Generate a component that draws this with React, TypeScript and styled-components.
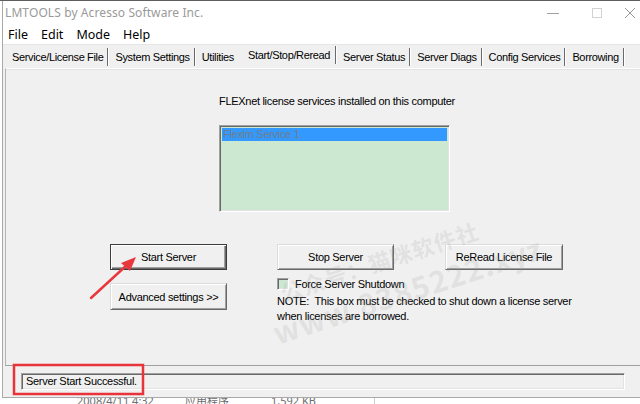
import React from "react";
import styled, { createGlobalStyle } from "styled-components";

const GlobalStyle = createGlobalStyle`
  html, body { margin: 0; padding: 0; width: 640px; height: 404px; overflow: hidden; background: #ffffff; }
  #root { width: 640px; height: 404px; }
`;

const Page = styled.div`
  position: relative;
  width: 640px;
  height: 404px;
  overflow: hidden;
  background: #ffffff;
  border-top: 1px solid #5e5e5e;
  box-sizing: border-box;
  display: flex;
  flex-direction: column;
`;

const Window = styled.div`
  height: 396px;
  margin-left: 2px;
  border-left: 1px solid #a9a9a9;
  border-bottom: 1px solid #a9a9a9;
  background: #f0f0f0;
  display: flex;
  flex-direction: column;
  font-family: "Liberation Sans", Arial, sans-serif;
  font-size: 11px;
  letter-spacing: -0.3px;
  color: #000;
`;

const TitleBar = styled.div`
  height: 23px;
  background: #ffffff;
  display: flex;
  align-items: center;
  padding-left: 2px;
  font-family: "Noto Sans", "Open Sans", sans-serif;
  font-size: 12px;
  letter-spacing: 0.1px;
  color: #9a9a9a;
`;

const Title = styled.span`
  flex: 1;
`;

const Controls = styled.div`
  display: flex;
  align-items: center;
  height: 100%;
`;

const ControlButton = styled.div<{ $w?: number }>`
  width: ${(p) => p.$w ?? 44}px;
  height: 23px;
  display: flex;
  align-items: center;
  justify-content: center;
`;

const MenuBar = styled.div`
  height: 20px;
  background: #ffffff;
  display: flex;
  align-items: center;
  font-family: "Noto Sans", "Open Sans", sans-serif;
  font-size: 12.5px;
  letter-spacing: 0;
  border-bottom: 1px solid #e6e6e6;
`;

const MenuItem = styled.span`
  padding: 0 6px 0 5px;
  margin-right: 2px;
`;

const TabStrip = styled.div`
  height: 23px;
  display: flex;
  align-items: center;
  padding-left: 3px;
  letter-spacing: -0.35px;
`;

const Tab = styled.div<{ $sep: boolean; $active?: boolean }>`
  height: 18px;
  display: flex;
  align-items: center;
  padding: ${(p) => (p.$active ? "0 5px 0 8px" : "0 4px 0 6px")};
  margin-top: ${(p) => (p.$active ? "-3px" : "0")};
  border-right: 1px solid ${(p) => (p.$sep ? "#6a6a6a" : "transparent")};
  box-shadow: ${(p) => (p.$sep ? "1px 0 0 #ffffff" : "none")};
  margin-right: 1px;
  white-space: nowrap;
`;

const Panel = styled.div`
  flex: 1;
  margin-left: 2px;
  border-top: 1px solid #ffffff;
  border-left: 1px solid #b4b4b4;
  border-bottom: 1px solid #a0a0a0;
  box-shadow: inset 0 1px 0 #e3e3e3;
  padding-top: 26px;
  display: flex;
  flex-direction: column;
`;

const ServiceBlock = styled.div`
  margin-left: 213px;
  display: flex;
  flex-direction: column;
  gap: 17px;
`;

const Label = styled.div`
  line-height: 13px;
`;

const ListBox = styled.div`
  width: 231px;
  height: 87px;
  box-sizing: border-box;
  background: #cde8d0;
  border-top: 1px solid #a0a0a0;
  border-left: 1px solid #a0a0a0;
  border-right: 1px solid #ffffff;
  border-bottom: 1px solid #ffffff;
  box-shadow: inset 1px 1px 0 #696969, inset -1px -1px 0 #e3e3e3;
  padding: 2px;
`;

const ListItem = styled.div<{ $selected?: boolean }>`
  height: 13px;
  line-height: 13px;
  padding-left: 1px;
  background: ${(p) => (p.$selected ? "#3399ff" : "transparent")};
  color: ${(p) => (p.$selected ? "#6f7d8a" : "#000")};
`;

const ButtonArea = styled.div`
  margin-top: 32px;
  margin-left: 104px;
  display: flex;
  gap: 50px;
`;

const Column = styled.div<{ $gap?: number }>`
  display: flex;
  flex-direction: column;
  gap: ${(p) => p.$gap ?? 0}px;
`;

const ButtonRow = styled.div`
  display: flex;
  gap: 51px;
`;

const Button = styled.div<{ $default?: boolean; $w?: number; $h?: number }>`
  width: ${(p) => p.$w ?? 117}px;
  height: ${(p) => p.$h ?? 26}px;
  box-sizing: border-box;
  display: flex;
  align-items: center;
  justify-content: center;
  background: #f0f0f0;
  border: 1px solid ${(p) => (p.$default ? "#3c3c3c" : "#dcdcdc")};
  border-right-color: ${(p) => (p.$default ? "#3c3c3c" : "#696969")};
  border-bottom-color: ${(p) => (p.$default ? "#3c3c3c" : "#696969")};
  box-shadow: ${(p) =>
    p.$default
      ? "inset 1px 1px 0 #ffffff, inset -1px -1px 0 #696969, inset -2px -2px 0 #a0a0a0"
      : "inset 1px 1px 0 #ffffff, inset -1px -1px 0 #a0a0a0"};
  font-size: 11px;
  white-space: nowrap;
`;

const CheckRow = styled.div`
  margin-top: 8px;
  display: flex;
  align-items: center;
  gap: 6px;
  height: 12px;
`;

const CheckBox = styled.div`
  width: 12px;
  height: 12px;
  box-sizing: border-box;
  background: #cde8d0;
  border-top: 1px solid #a0a0a0;
  border-left: 1px solid #a0a0a0;
  border-right: 1px solid #ffffff;
  border-bottom: 1px solid #ffffff;
  box-shadow: inset 1px 1px 0 #696969, inset -1px -1px 0 #e3e3e3;
`;

const Note = styled.div`
  margin-top: 4px;
  line-height: 15px;
  white-space: nowrap;
`;

const StatusArea = styled.div`
  height: 31px;
  padding: 7px 0 0 18px;
  box-sizing: border-box;
`;

const StatusField = styled.div`
  width: 604px;
  height: 17px;
  box-sizing: border-box;
  border-top: 1px solid #a0a0a0;
  border-left: 1px solid #a0a0a0;
  border-right: 1px solid #ffffff;
  border-bottom: 1px solid #ffffff;
  box-shadow: inset 1px 1px 0 #696969, inset -1px -1px 0 #e3e3e3;
  padding-left: 4px;
  line-height: 15px;
`;

const Behind = styled.div`
  flex: 1;
  position: relative;
  overflow: hidden;
  background: #ffffff;
  display: flex;
  font-family: "Noto Sans", "Noto Sans CJK SC", sans-serif;
  font-size: 11px;
  color: #6d6d6d;
`;

const BehindCell = styled.span<{ $w: number }>`
  flex: 0 0 ${(p) => p.$w}px;
  margin-top: -5px;
  line-height: 15px;
  white-space: nowrap;
`;

const BehindDivider = styled.div`
  flex: 0 0 1px;
  background: #cfcfcf;
`;

const Annotation = styled.svg`
  position: absolute;
  left: 0;
  top: 0;
  pointer-events: none;
`;

const Watermark = styled.div<{ $x: number; $y: number; $size: number }>`
  position: absolute;
  left: ${(p) => p.$x}px;
  top: ${(p) => p.$y}px;
  transform: rotate(-18deg);
  transform-origin: left bottom;
  font-family: "Noto Sans CJK SC", "Noto Sans", sans-serif;
  font-weight: 700;
  font-size: ${(p) => p.$size}px;
  line-height: 1;
  color: rgba(150, 150, 150, 0.17);
  white-space: nowrap;
  pointer-events: none;
  letter-spacing: 1px;
`;

const tabs: { label: string; sep: boolean; active?: boolean }[] = [
  { label: "Service/License File", sep: true },
  { label: "System Settings", sep: true },
  { label: "Utilities", sep: false },
  { label: "Start/Stop/Reread", sep: true, active: true },
  { label: "Server Status", sep: true },
  { label: "Server Diags", sep: true },
  { label: "Config Services", sep: true },
  { label: "Borrowing", sep: true },
];

export default function App() {
  return (
    <>
      <GlobalStyle />
      <Page>
        <Window>
          <TitleBar>
            <Title>LMTOOLS by Acresso Software Inc.</Title>
            <Controls>
              <ControlButton>
                <svg width="12" height="12" viewBox="0 0 12 12">
                  <line x1="0" y1="6.5" x2="12" y2="6.5" stroke="#a0a0a0" strokeWidth="1" />
                </svg>
              </ControlButton>
              <ControlButton>
                <svg width="12" height="12" viewBox="0 0 12 12">
                  <rect x="1.5" y="1.5" width="9" height="9" fill="none" stroke="#d2d2d2" strokeWidth="1" />
                </svg>
              </ControlButton>
              <ControlButton $w={21}>
                <svg width="12" height="12" viewBox="0 0 12 12">
                  <path d="M1 1 L11 11 M11 1 L1 11" stroke="#9a9a9a" strokeWidth="1" />
                </svg>
              </ControlButton>
            </Controls>
          </TitleBar>
          <MenuBar>
            <MenuItem>File</MenuItem>
            <MenuItem>Edit</MenuItem>
            <MenuItem>Mode</MenuItem>
            <MenuItem>Help</MenuItem>
          </MenuBar>
          <TabStrip>
            {tabs.map((t) => (
              <Tab key={t.label} $sep={t.sep} $active={t.active}>
                {t.label}
              </Tab>
            ))}
          </TabStrip>
          <Panel>
            <ServiceBlock>
              <Label>FLEXnet license services installed on this computer</Label>
              <ListBox>
                <ListItem $selected>Flexlm Service 1</ListItem>
              </ListBox>
            </ServiceBlock>
            <ButtonArea>
              <Column $gap={13}>
                <Button $default>Start Server</Button>
                <Button $h={27}>Advanced settings &gt;&gt;</Button>
              </Column>
              <Column>
                <ButtonRow>
                  <Button>Stop Server</Button>
                  <Button $w={118}>ReRead License File</Button>
                </ButtonRow>
                <CheckRow>
                  <CheckBox />
                  <span>Force Server Shutdown</span>
                </CheckRow>
                <Note>
                  NOTE:&nbsp; This box must be checked to shut down a license server
                  <br />
                  when licenses are borrowed.
                </Note>
              </Column>
            </ButtonArea>
          </Panel>
          <StatusArea>
            <StatusField>Server Start Successful.</StatusField>
          </StatusArea>
        </Window>
        <Behind>
          <BehindCell $w={77} />
          <BehindCell $w={108}>2008/4/11 4:32</BehindCell>
          <BehindCell $w={86}>应用程序</BehindCell>
          <BehindCell $w={103}>1,592 KB</BehindCell>
          <BehindDivider />
        </Behind>
        <Watermark $x={284} $y={280} $size={22}>公众号：猫咪软件社</Watermark>
        <Watermark $x={278} $y={316} $size={30}>www.8385222.xyz</Watermark>
        <Annotation width="640" height="404" viewBox="0 0 640 404">
          <line x1="91" y1="297" x2="128" y2="263" stroke="#e8383d" strokeWidth="2.5" strokeLinecap="round" />
          <polygon points="136,256 121,262 130,270" fill="#e8383d" />
          <rect x="14" y="364" width="129" height="29" fill="none" stroke="#e8333b" strokeWidth="2.5" />
        </Annotation>
      </Page>
    </>
  );
}
